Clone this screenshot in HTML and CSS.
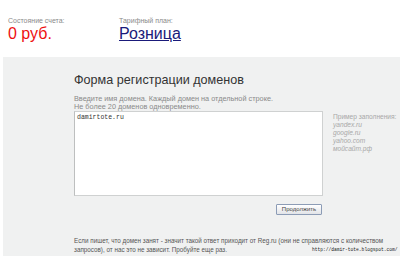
FILE: index.html
```html
<!DOCTYPE html>
<html lang="ru">
<head>
<meta charset="utf-8">
<title>Регистрация доменов</title>
<link rel="stylesheet" href="styles.css">
</head>
<body>
<div class="top">
  <div class="col col-balance">
    <div class="label">Состояние счета:</div>
    <div class="balance">0 руб.</div>
  </div>
  <div class="col">
    <div class="label">Тарифный план:</div>
    <a class="plan" href="#">Розница</a>
  </div>
</div>
<div class="panel">
  <h1 class="title">Форма регистрации доменов</h1>
  <p class="desc">Введите имя домена. Каждый домен на отдельной строке.<br>Не более 20 доменов одновременно.</p>
  <div class="row">
    <div class="left">
      <textarea class="domains">damirtote.ru</textarea>
      <div class="actions"><button class="btn" type="button">Продолжить</button></div>
    </div>
    <div class="example">
      <div>Пример заполнения:</div>
      <div class="ex">yandex.ru</div>
      <div class="ex">google.ru</div>
      <div class="ex">yahoo.com</div>
      <div class="ex">мойсайт.рф</div>
    </div>
  </div>
  <p class="note">Если пишет, что домен занят - значит такой ответ приходит от Reg.ru (они не справляются с количеством<br>запросов), от нас это не зависит. Пробуйте еще раз.</p>
</div>
<div class="watermark">http://damir-tote.blogspot.com/</div>
</body>
</html>
```
FILE: styles.css
```css
html, body {
  margin: 0;
  padding: 0;
  background: #fff;
  overflow: hidden;
  font-family: "Liberation Sans", Arial, sans-serif;
}
body {
  width: 400px;
  height: 256px;
  position: relative;
}
.top {
  display: flex;
  padding: 17px 0 15px 8px;
}
.col-balance {
  width: 111px;
}
.label {
  font-size: 7px;
  line-height: 8px;
  color: #8a8a8a;
}
.balance {
  font-size: 16px;
  line-height: 17px;
  color: #ee1111;
}
.plan {
  display: block;
  font-size: 16px;
  line-height: 17px;
  color: #1a1a7a;
  text-decoration: underline;
}
.panel {
  margin-left: 3px;
  background: #f0f1f1;
  height: 199px;
  padding: 16px 0 0 71px;
  box-sizing: border-box;
}
.title {
  margin: 0;
  font-weight: normal;
  font-size: 12.6px;
  line-height: 15px;
  color: #333;
}
.desc {
  margin: 7px 0 0;
  font-size: 7.3px;
  line-height: 8px;
  color: #8a8a8a;
}
.row {
  display: flex;
  gap: 10px;
}
.left {
  width: 249px;
  flex: none;
}
.domains {
  display: block;
  box-sizing: border-box;
  width: 249px;
  height: 85px;
  margin: 0;
  padding: 2px 2px;
  border: 1px solid #cfd1d1;
  border-left-color: #bdbfbf;
  background: #fff;
  font-family: "Liberation Mono", "Courier New", monospace;
  font-size: 6.5px;
  line-height: 8px;
  color: #333;
  resize: none;
  outline: none;
}
.actions {
  display: flex;
  justify-content: flex-end;
  margin-top: 8px;
  padding-right: 1px;
}
.btn {
  width: 46px;
  height: 11px;
  padding: 0;
  border: 1px solid #8c9cb6;
  border-radius: 1px;
  background: linear-gradient(#ffffff, #e2e4e8);
  font-family: "Liberation Sans", Arial, sans-serif;
  font-size: 6px;
  line-height: 9px;
  color: #444;
}
.example {
  margin-top: 2px;
  font-size: 6.6px;
  line-height: 8px;
  color: #a8a8a8;
  white-space: nowrap;
}
.ex {
  font-style: italic;
}
.note {
  margin: 21px 0 0;
  font-size: 6.3px;
  line-height: 9px;
  color: #555;
  white-space: nowrap;
}
.watermark {
  position: absolute;
  left: 312px;
  top: 247px;
  font-family: "Liberation Mono", "Courier New", monospace;
  font-size: 4.6px;
  line-height: 6px;
  color: #222;
}
```
